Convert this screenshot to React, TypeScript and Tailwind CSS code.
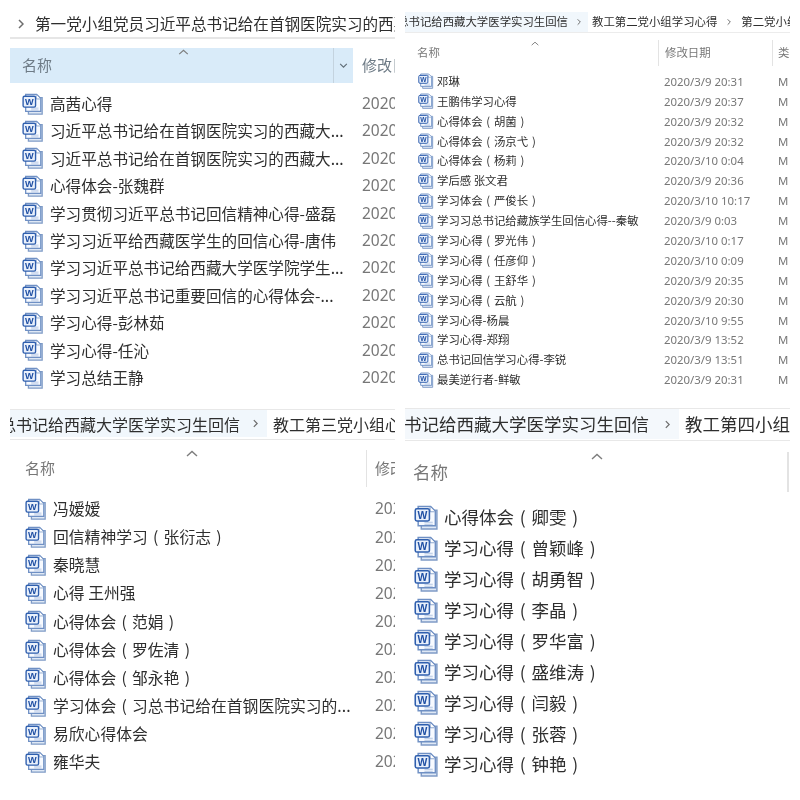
import React from "react";

const FONT = "font-['Noto_Sans_CJK_SC','Noto_Sans',sans-serif]";
const NUM = "font-['Noto_Sans','Noto_Sans_CJK_SC',sans-serif]";

function WordIcon({ cls }: { cls: string }) {
  return (
    <svg viewBox="0 0 24 24" className={cls} aria-hidden="true">
      <path d="M7 5H22V23H7Z" fill="#dfe8f5" stroke="#7f9bc6" strokeWidth="1.4" />
      <path d="M4 1.5H16L20.5 6V20H4Z" fill="#f7faff" stroke="#6f90c4" strokeWidth="1.4" />
      <path d="M15.5 2V6.5H20" fill="#ffffff" stroke="#8fa9d0" strokeWidth="1" />
      <path d="M10 16.5H18M10 18.5H18" stroke="#b4c6e2" strokeWidth="1" />
      <rect x="1.2" y="3.6" width="13.6" height="11.8" rx="1.6" fill="#e9f0fb" stroke="#2f5fae" strokeWidth="1.5" />
      <text x="8" y="13" textAnchor="middle" fontSize="10" fontWeight="700" fill="#1f4fa3" fontFamily="Liberation Sans, sans-serif">W</text>
    </svg>
  );
}

function Caret({ cls }: { cls: string }) {
  return (
    <svg viewBox="0 0 12 7" className={cls} aria-hidden="true">
      <path d="M1 6L6 1.5L11 6" fill="none" stroke="#7d7d7d" strokeWidth="1.4" />
    </svg>
  );
}

function Chevron({ cls }: { cls: string }) {
  return (
    <svg viewBox="0 0 6 10" className={cls} aria-hidden="true">
      <path d="M1 1L5 5L1 9" fill="none" stroke="#6d6d6d" strokeWidth="1.5" />
    </svg>
  );
}

function Name({ t }: { t: string }) {
  const parts = t.split(/([（）])/);
  return (
    <>
      {parts.map((p, i) =>
        p === "（" || p === "）" ? (
          <span key={i} className="inline-block w-[1em] text-center">{p === "（" ? "(" : ")"}</span>
        ) : (
          <React.Fragment key={i}>{p}</React.Fragment>
        )
      )}
    </>
  );
}

const a = [
  "高茜心得",
  "习近平总书记给在首钢医院实习的西藏大...",
  "习近平总书记给在首钢医院实习的西藏大...",
  "心得体会-张魏群",
  "学习贯彻习近平总书记回信精神心得-盛磊",
  "学习习近平给西藏医学生的回信心得-唐伟",
  "学习习近平总书记给西藏大学医学院学生...",
  "学习习近平总书记重要回信的心得体会-...",
  "学习心得-彭林茹",
  "学习心得-任沁",
  "学习总结王静",
];

const b: [string, string][] = [
  ["邓琳", "2020/3/9 20:31"],
  ["王鹏伟学习心得", "2020/3/9 20:37"],
  ["心得体会（胡菌）", "2020/3/9 20:32"],
  ["心得体会（汤京弋）", "2020/3/9 20:32"],
  ["心得体会（杨莉）", "2020/3/10 0:04"],
  ["学后感 张文君", "2020/3/9 20:36"],
  ["学习体会（严俊长）", "2020/3/10 10:17"],
  ["学习习总书记给藏族学生回信心得--秦敏", "2020/3/9 0:03"],
  ["学习心得（罗光伟）", "2020/3/10 0:17"],
  ["学习心得（任彦仰）", "2020/3/10 0:09"],
  ["学习心得（王舒华）", "2020/3/9 20:35"],
  ["学习心得（云航）", "2020/3/9 20:30"],
  ["学习心得-杨晨", "2020/3/10 9:55"],
  ["学习心得-郑翔", "2020/3/9 13:52"],
  ["总书记回信学习心得-李锐", "2020/3/9 13:51"],
  ["最美逆行者-鲜敏", "2020/3/9 20:31"],
];

const c = [
  "冯嫒嫒",
  "回信精神学习（张衍志）",
  "秦晓慧",
  "心得 王州强",
  "心得体会（范娟）",
  "心得体会（罗佐清）",
  "心得体会（邹永艳）",
  "学习体会（习总书记给在首钢医院实习的...",
  "易欣心得体会",
  "雍华夫",
];

const d = [
  "心得体会（卿雯）",
  "学习心得（曾颖峰）",
  "学习心得（胡勇智）",
  "学习心得（李晶）",
  "学习心得（罗华富）",
  "学习心得（盛维涛）",
  "学习心得（闫毅）",
  "学习心得（张蓉）",
  "学习心得（钟艳）",
];

function PanelA() {
  return (
    <section className="w-[385px] h-[400px] ml-[10px] mr-[5px] pt-[14px] overflow-hidden">
      <div className="h-[25px] flex items-center border-b-2 border-[#e6e6e6] whitespace-nowrap text-[15.6px] text-[#2e2e2e] overflow-hidden pb-[3px]">
        <Chevron cls="w-[6px] h-[10px] ml-[8px] mr-[11px] shrink-0" />
        <span>第一党小组党员习近平总书记给在首钢医院实习的西藏大学</span>
      </div>
      <div className="mt-[9px] h-[35px] flex items-center whitespace-nowrap">
        <div className="relative w-[343px] h-full bg-[#d9ebf9] flex items-center pl-[12px] text-[15px] text-[#6e7b86] shrink-0">
          <span>名称</span>
          <Caret cls="absolute left-[168px] top-[1px] w-[11px] h-[6px]" />
          <div className="absolute right-0 top-0 w-[20px] h-full border-l border-[#c4d3df] flex items-center justify-center">
            <svg viewBox="0 0 10 6" className="w-[9px] h-[5px]" aria-hidden="true">
              <path d="M1 1L5 5L9 1" fill="none" stroke="#5f6b75" strokeWidth="1.3" />
            </svg>
          </div>
        </div>
        <span className="ml-[9px] text-[15px] text-[#6e7b86]">修改日期</span>
      </div>
      <ul className="mt-[7px]">
        {a.map((t, i) => (
          <li key={i} className="h-[27.4px] flex items-center whitespace-nowrap">
            <WordIcon cls="w-[22px] h-[22px] ml-[12px] shrink-0" />
            <span className="ml-[6px] w-[302px] shrink-0 text-[15.6px] text-[#2e2e2e] overflow-hidden">{t}</span>
            <span className={`ml-[10px] text-[15.5px] text-[#777] ${NUM}`}>2020/3/9 20:31</span>
          </li>
        ))}
      </ul>
    </section>
  );
}

function PanelB() {
  return (
    <section className="w-[385px] h-[400px] ml-[5px] mr-[10px] pt-[12px] overflow-hidden">
      <div className="h-[21px] flex items-center border-b border-[#ececec] whitespace-nowrap text-[11.4px] text-[#2e2e2e] overflow-hidden">
        <div className="w-[183px] h-full bg-[#f1f7fc] flex items-center justify-end overflow-hidden shrink-0 pr-[7px]">
          <span>总书记给西藏大学医学实习生回信</span>
          <Chevron cls="w-[4px] h-[8px] ml-[9px] shrink-0" />
        </div>
        <span className="ml-[4px]">教工第二党小组学习心得</span>
        <Chevron cls="w-[4px] h-[8px] mx-[10px] shrink-0" />
        <span>第二党小组</span>
      </div>
      <div className="relative mt-[7px] h-[26px] flex items-center whitespace-nowrap text-[11.4px] text-[#777]">
        <Caret cls="absolute left-[126px] top-[1px] w-[8px] h-[5px]" />
        <span className="ml-[12px] w-[241px] shrink-0">名称</span>
        <span className="h-full border-l border-[#e3e3e3] pl-[6px] w-[114px] shrink-0 flex items-center">修改日期</span>
        <span className="h-full border-l border-[#e3e3e3] pl-[5px] flex items-center">类型</span>
      </div>
      <ul className="mt-[5.5px]">
        {b.map(([t, dt], i) => (
          <li key={i} className="h-[19.9px] flex items-center whitespace-nowrap">
            <WordIcon cls="w-[16px] h-[16px] ml-[13px] shrink-0" />
            <span className="ml-[3px] w-[227px] shrink-0 text-[11.4px] text-[#2e2e2e]"><Name t={t} /></span>
            <span className={`w-[114px] shrink-0 text-[11.4px] text-[#777] ${NUM}`}>{dt}</span>
            <span className={`text-[11.4px] text-[#777] ${NUM}`}>M</span>
          </li>
        ))}
      </ul>
    </section>
  );
}

function PanelC() {
  return (
    <section className="w-[385px] h-[400px] ml-[10px] mr-[5px] pt-[9px] overflow-hidden">
      <div className="h-[31px] flex items-center border-y border-[#e8e8e8] whitespace-nowrap text-[16px] text-[#2e2e2e] overflow-hidden pb-[2px]">
        <div className="w-[257px] h-full bg-[#f1f7fc] flex items-center justify-end overflow-hidden shrink-0 pr-[9px]">
          <span>总书记给西藏大学医学实习生回信</span>
          <Chevron cls="w-[5px] h-[9px] ml-[13px] shrink-0" />
        </div>
        <span className="ml-[6px]">教工第三党小组心得</span>
      </div>
      <div className="relative mt-[10px] h-[37px] flex items-center whitespace-nowrap text-[15px] text-[#777]">
        <Caret cls="absolute left-[176px] top-[0px] w-[12px] h-[7px]" />
        <span className="ml-[15px] w-[341px] shrink-0">名称</span>
        <span className="h-full border-l border-[#e3e3e3] pl-[8px] flex items-center">修改日期</span>
      </div>
      <ul className="mt-[8px]">
        {c.map((t, i) => (
          <li key={i} className="h-[28.1px] flex items-center whitespace-nowrap">
            <WordIcon cls="w-[22px] h-[22px] ml-[15px] shrink-0" />
            <span className="ml-[6px] w-[322px] shrink-0 text-[15.8px] text-[#2e2e2e] overflow-hidden"><Name t={t} /></span>
            <span className={`text-[15.5px] text-[#777] ${NUM}`}>2020/3/9</span>
          </li>
        ))}
      </ul>
    </section>
  );
}

function PanelD() {
  return (
    <section className="w-[385px] h-[400px] ml-[5px] mr-[10px] pt-[8px] overflow-hidden">
      <div className="h-[33px] flex items-center border-y border-[#e8e8e8] whitespace-nowrap text-[17.5px] text-[#2e2e2e] overflow-hidden pb-[1px]">
        <div className="w-[274px] h-full bg-[#f4f8fc] flex items-center justify-end overflow-hidden shrink-0 pr-[9px]">
          <span>总书记给西藏大学医学实习生回信</span>
          <Chevron cls="w-[5px] h-[9px] ml-[16px] shrink-0" />
        </div>
        <span className="ml-[6px]">教工第四小组</span>
      </div>
      <div className="relative mt-[11px] h-[40px] flex items-center justify-between whitespace-nowrap text-[17.5px] text-[#777]">
        <Caret cls="absolute left-[186px] top-[1px] w-[12px] h-[7px]" />
        <span className="ml-[8px]">名称</span>
        <span className="h-full border-l-2 border-[#e3e3e3] mr-[1px]" />
      </div>
      <ul className="mt-[10px]">
        {d.map((t, i) => (
          <li key={i} className="h-[30.9px] flex items-center whitespace-nowrap">
            <WordIcon cls="w-[25px] h-[25px] ml-[9px] shrink-0" />
            <span className="ml-[5px] text-[17.5px] text-[#2e2e2e]"><Name t={t} /></span>
          </li>
        ))}
      </ul>
    </section>
  );
}

export default function App() {
  return (
    <main className={`w-[800px] h-[800px] bg-white overflow-hidden grid grid-cols-2 blur-[0.5px] ${FONT}`}>
      <PanelA />
      <PanelB />
      <PanelC />
      <PanelD />
    </main>
  );
}
